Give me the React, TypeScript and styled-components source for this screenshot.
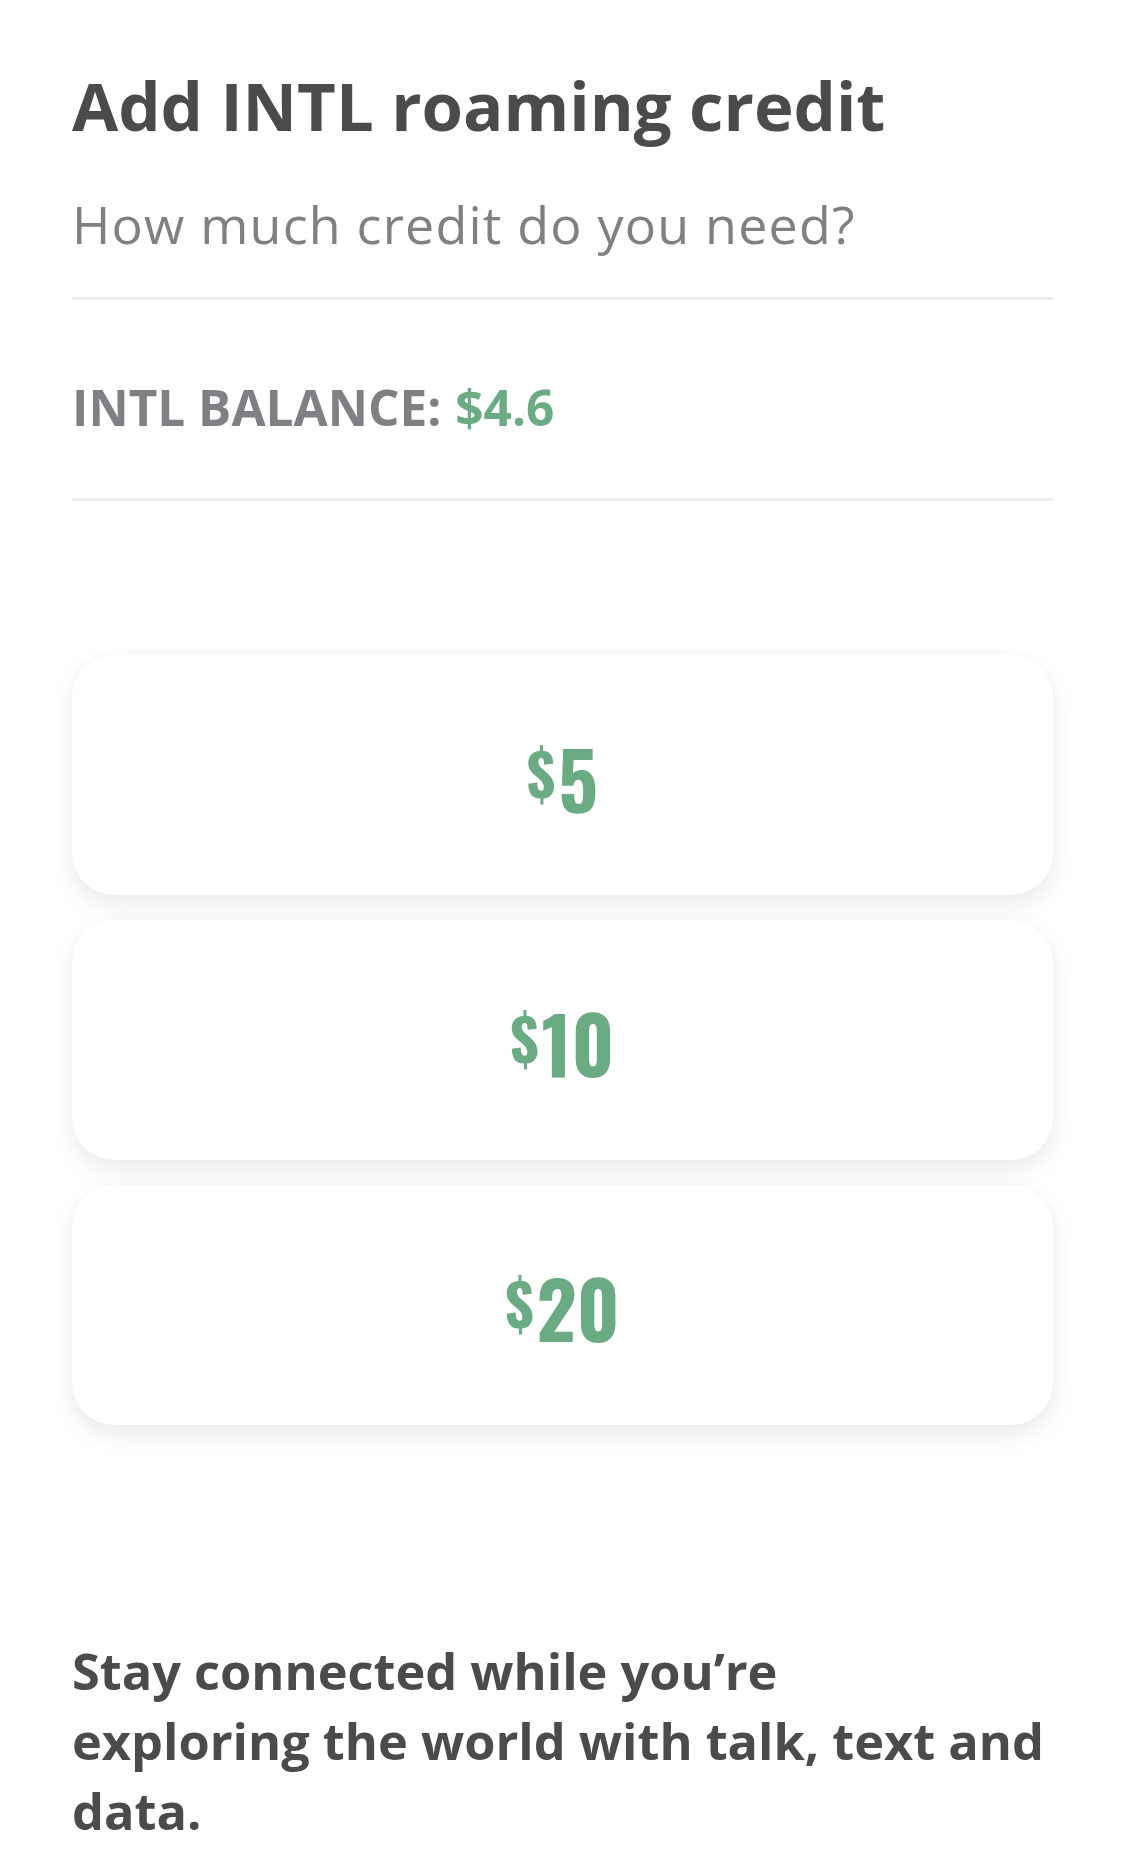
import React from 'react'
import styled, { createGlobalStyle } from 'styled-components'

const GlobalStyle = createGlobalStyle`
  html, body {
    margin: 0;
    padding: 0;
    background: #ffffff;
  }

  body {
    font-family: "Open Sans", "Noto Sans", sans-serif;
    -webkit-font-smoothing: antialiased;
  }
`

const amounts = [5, 10, 20]

const App = () => {
  return (
    <>
      <GlobalStyle />
      <Page>
        <Header>
          <Title>Add INTL roaming credit</Title>
          <Subtitle>How much credit do you need?</Subtitle>
        </Header>

        <BalanceRow>
          <BalanceLabel>INTL BALANCE:</BalanceLabel>
          <BalanceValue>$4.6</BalanceValue>
        </BalanceRow>

        <Options>
          {amounts.map((amount) => (
            <OptionCard key={amount} type='button'>
              <Amount>
                <Dollar>$</Dollar>
                <Digits>{amount}</Digits>
              </Amount>
            </OptionCard>
          ))}
        </Options>

        <Footnote>
          Stay connected while you’re
          <br />
          exploring the world with talk, text and
          <br />
          data.
        </Footnote>
      </Page>
    </>
  )
}

export default App

const Page = styled.div`
  display: flex;
  flex-direction: column;
  width: 1125px;
  min-height: 1857px;
  box-sizing: border-box;
  padding: 65px 72px 0;
`

const Header = styled.div`
  display: flex;
  flex-direction: column;
  gap: 47px;
  padding-bottom: 41px;
  border-bottom: 3px solid #ececec;
`

const Title = styled.h1`
  margin: 0;
  font-size: 67px;
  line-height: 80px;
  font-weight: 700;
  color: #4b4b4d;
  white-space: nowrap;
`

const Subtitle = styled.p`
  margin: 0;
  font-size: 52px;
  line-height: 64px;
  font-weight: 400;
  letter-spacing: 1.2px;
  color: #808083;
  white-space: nowrap;
`

const BalanceRow = styled.div`
  display: flex;
  align-items: baseline;
  gap: 14px;
  padding: 77px 0 61px;
  border-bottom: 3px solid #ececec;
  font-size: 49.5px;
  line-height: 60px;
  font-weight: 700;
`

const BalanceLabel = styled.span`
  color: #7f8083;
`

const BalanceValue = styled.span`
  color: #6aab84;
`

const Options = styled.div`
  display: flex;
  flex-direction: column;
  gap: 25px;
  margin-top: 154px;
`

const OptionCard = styled.button`
  display: flex;
  align-items: center;
  justify-content: center;
  height: 240px;
  padding: 0;
  border: none;
  border-radius: 42px;
  background: #ffffff;
  box-shadow: 0 10px 26px rgba(0, 0, 0, 0.08), 0 0 10px rgba(0, 0, 0, 0.025);
  cursor: pointer;
`

const Amount = styled.span`
  display: flex;
  align-items: flex-start;
  font-family: "Oswald", "Roboto Condensed", "DejaVu Sans Condensed", sans-serif;
  font-weight: 700;
  color: #6aab84;
  margin-top: 3px;
`

const Dollar = styled.span`
  font-size: 58px;
  line-height: 60px;
  margin-right: 3px;
  margin-top: 4px;
`

const Digits = styled.span`
  font-size: 78px;
  line-height: 78px;
`

const Footnote = styled.p`
  margin: 211px 0 0;
  font-size: 50.5px;
  line-height: 70px;
  font-weight: 700;
  color: #4b4b4d;
  white-space: nowrap;
`
